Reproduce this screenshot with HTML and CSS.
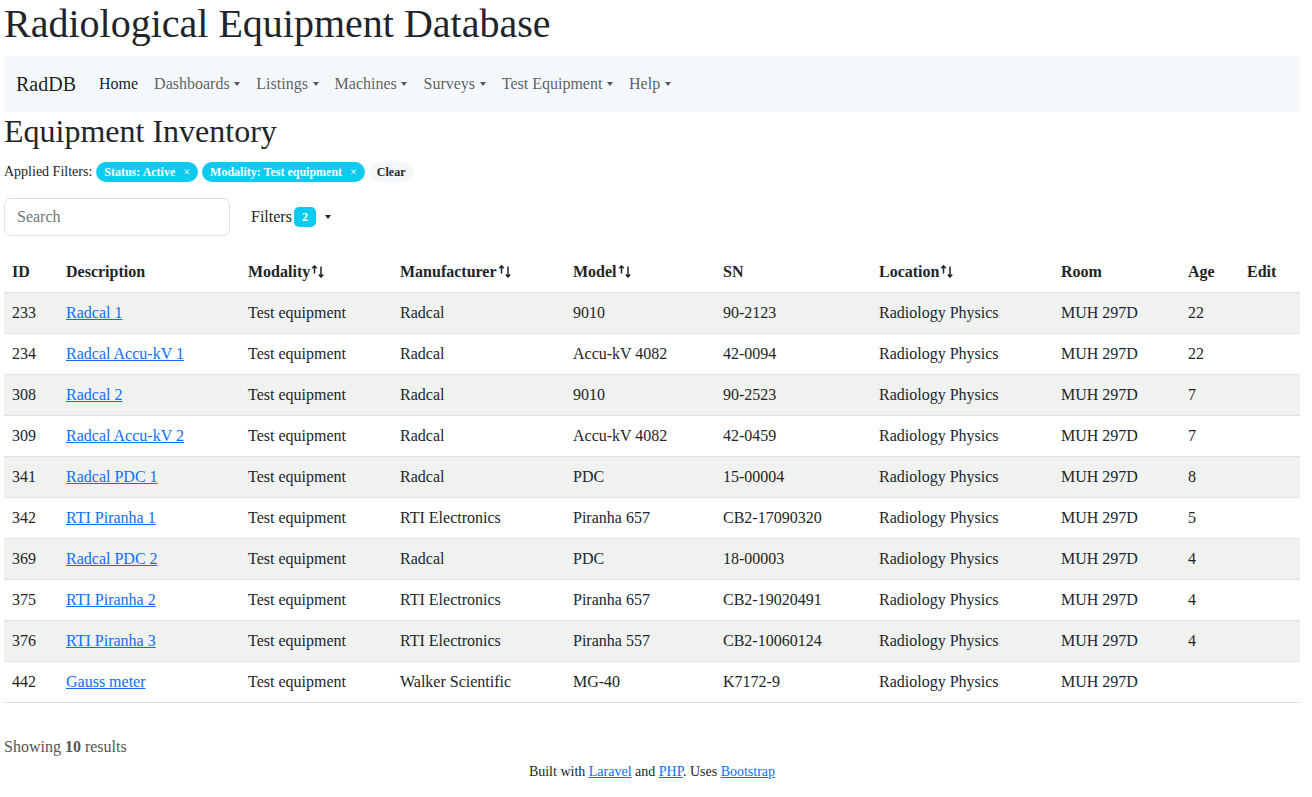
FILE: index.html
```html
<!DOCTYPE html>
<html>
<head>
<meta charset="utf-8">
<link rel="stylesheet" href="styles.css">
</head>
<body>
<div class="page">
  <h1 class="title">Radiological Equipment Database</h1>
  <nav class="navbar">
    <span class="brand">RadDB</span>
    <ul class="nav">
      <li class="nav-link active">Home</li>
      <li class="nav-link dd">Dashboards</li>
      <li class="nav-link dd">Listings</li>
      <li class="nav-link dd">Machines</li>
      <li class="nav-link dd">Surveys</li>
      <li class="nav-link dd">Test Equipment</li>
      <li class="nav-link dd">Help</li>
    </ul>
  </nav>
  <h2 class="heading">Equipment Inventory</h2>
  <div class="applied">
    <span>Applied Filters:</span>
    <span class="pill info">Status: Active <span class="x">×</span></span>
    <span class="pill info">Modality: Test equipment <span class="x">×</span></span>
    <span class="pill light">Clear</span>
  </div>
  <div class="toolbar">
    <input class="search" type="text" placeholder="Search">
    <button class="filters dd">Filters <span class="count">2</span></button>
  </div>
  <table class="grid">
    <colgroup>
      <col style="width:54px"><col style="width:182px"><col style="width:152px"><col style="width:173px"><col style="width:150px"><col style="width:156px"><col style="width:182px"><col style="width:127px"><col style="width:59px"><col style="width:61px">
    </colgroup>
    <thead>
      <tr>
        <th>ID</th><th>Description</th>
        <th>Modality<svg class="sort" viewBox="0 0 14 14"><path d="M3.5 9.5V2M1.3 4.3L3.5 1.8L5.7 4.3M10 2.5V12.8M7.8 10.5L10 13L12.2 10.5"/></svg></th>
        <th>Manufacturer<svg class="sort" viewBox="0 0 14 14"><path d="M3.5 9.5V2M1.3 4.3L3.5 1.8L5.7 4.3M10 2.5V12.8M7.8 10.5L10 13L12.2 10.5"/></svg></th>
        <th>Model<svg class="sort" viewBox="0 0 14 14"><path d="M3.5 9.5V2M1.3 4.3L3.5 1.8L5.7 4.3M10 2.5V12.8M7.8 10.5L10 13L12.2 10.5"/></svg></th>
        <th>SN</th>
        <th>Location<svg class="sort" viewBox="0 0 14 14"><path d="M3.5 9.5V2M1.3 4.3L3.5 1.8L5.7 4.3M10 2.5V12.8M7.8 10.5L10 13L12.2 10.5"/></svg></th>
        <th>Room</th><th>Age</th><th>Edit</th>
      </tr>
    </thead>
    <tbody>
      <tr><td>233</td><td><a href="#">Radcal 1</a></td><td>Test equipment</td><td>Radcal</td><td>9010</td><td>90-2123</td><td>Radiology Physics</td><td>MUH 297D</td><td>22</td><td></td></tr>
      <tr><td>234</td><td><a href="#">Radcal Accu-kV 1</a></td><td>Test equipment</td><td>Radcal</td><td>Accu-kV 4082</td><td>42-0094</td><td>Radiology Physics</td><td>MUH 297D</td><td>22</td><td></td></tr>
      <tr><td>308</td><td><a href="#">Radcal 2</a></td><td>Test equipment</td><td>Radcal</td><td>9010</td><td>90-2523</td><td>Radiology Physics</td><td>MUH 297D</td><td>7</td><td></td></tr>
      <tr><td>309</td><td><a href="#">Radcal Accu-kV 2</a></td><td>Test equipment</td><td>Radcal</td><td>Accu-kV 4082</td><td>42-0459</td><td>Radiology Physics</td><td>MUH 297D</td><td>7</td><td></td></tr>
      <tr><td>341</td><td><a href="#">Radcal PDC 1</a></td><td>Test equipment</td><td>Radcal</td><td>PDC</td><td>15-00004</td><td>Radiology Physics</td><td>MUH 297D</td><td>8</td><td></td></tr>
      <tr><td>342</td><td><a href="#">RTI Piranha 1</a></td><td>Test equipment</td><td>RTI Electronics</td><td>Piranha 657</td><td>CB2-17090320</td><td>Radiology Physics</td><td>MUH 297D</td><td>5</td><td></td></tr>
      <tr><td>369</td><td><a href="#">Radcal PDC 2</a></td><td>Test equipment</td><td>Radcal</td><td>PDC</td><td>18-00003</td><td>Radiology Physics</td><td>MUH 297D</td><td>4</td><td></td></tr>
      <tr><td>375</td><td><a href="#">RTI Piranha 2</a></td><td>Test equipment</td><td>RTI Electronics</td><td>Piranha 657</td><td>CB2-19020491</td><td>Radiology Physics</td><td>MUH 297D</td><td>4</td><td></td></tr>
      <tr><td>376</td><td><a href="#">RTI Piranha 3</a></td><td>Test equipment</td><td>RTI Electronics</td><td>Piranha 557</td><td>CB2-10060124</td><td>Radiology Physics</td><td>MUH 297D</td><td>4</td><td></td></tr>
      <tr><td>442</td><td><a href="#">Gauss meter</a></td><td>Test equipment</td><td>Walker Scientific</td><td>MG-40</td><td>K7172-9</td><td>Radiology Physics</td><td>MUH 297D</td><td></td><td></td></tr>
    </tbody>
  </table>
  <p class="showing">Showing <b>10</b> results</p>
  <footer class="footer">Built with <a href="#">Laravel</a> and <a href="#">PHP</a>. Uses <a href="#">Bootstrap</a></footer>
</div>
</body>
</html>
```
FILE: styles.css
```css
* { box-sizing: border-box; }
body {
  margin: 0;
  font-family: "Liberation Serif", "Times New Roman", serif;
  font-size: 16px;
  line-height: 1.5;
  color: #212529;
  background: #fff;
}
a { color: #0d6efd; }
.page { padding: 0 12px 0 4px; }
.title {
  margin: 0 0 8px;
  font-size: 40px;
  font-weight: 400;
  line-height: 1.2;
}
.navbar {
  display: flex;
  align-items: center;
  height: 56px;
  padding: 8px 12px;
  background: #f4f8fb;
}
.brand {
  font-size: 20px;
  line-height: 30px;
  margin-right: 15px;
  color: rgba(0,0,0,.9);
}
.nav {
  display: flex;
  list-style: none;
  margin: 0;
  padding: 0;
}
.nav-link {
  padding: 8px;
  color: rgba(0,0,0,.65);
}
.nav-link.active { color: rgba(0,0,0,.9); }
.dd::after {
  content: "";
  display: inline-block;
  margin-left: 4.7px;
  vertical-align: 3px;
  border-top: 4px solid;
  border-right: 3.8px solid transparent;
  border-left: 3.8px solid transparent;
}
.heading {
  margin: 0 0 11px;
  font-size: 32px;
  font-weight: 400;
  line-height: 1.2;
}
.applied {
  display: flex;
  align-items: center;
  gap: 4px;
  font-size: 14px;
  line-height: 21px;
}
.pill {
  display: inline-block;
  padding: 3px 8px;
  border-radius: 10px;
  font-size: 12px;
  font-weight: 700;
  line-height: 14px;
}
.pill.info { background: #0dcaf0; color: #fff; }
.pill.light { background: #f4f8fb; color: #212529; }
.pill .x { font-weight: 400; margin-left: 5px; font-size: 12px; }
.toolbar {
  display: flex;
  align-items: center;
  margin-top: 16px;
  gap: 9px;
}
.search {
  width: 226px;
  height: 38px;
  padding: 6px 12px;
  border: 1px solid #dee2e6;
  border-radius: 6px;
  font-family: inherit;
  font-size: 16px;
  color: #212529;
}
.search::placeholder { color: #6c757d; }
.filters {
  background: none;
  border: 0;
  padding: 6px 12px;
  font-family: inherit;
  font-size: 16px;
  color: #212529;
  display: flex;
  align-items: center;
}
.filters::after { margin-left: 9px; vertical-align: 0; }
.count {
  display: inline-block;
  margin-left: 2px;
  background: #0dcaf0;
  color: #fff;
  font-size: 12px;
  font-weight: 700;
  line-height: 14px;
  padding: 3px 8px;
  border-radius: 5px;
}
.grid {
  width: 1296px;
  margin-top: 16px;
  border-collapse: collapse;
  table-layout: fixed;
}
.grid th, .grid td {
  padding: 8px;
  text-align: left;
  border-bottom: 1px solid #dee2e6;
  white-space: nowrap;
}
.grid th { font-weight: 700; }
.grid tbody tr:nth-child(odd) td { background: #f0f2f0; }
.sort {
  width: 14px;
  height: 14px;
  margin-left: 1px;
  vertical-align: -1px;
  fill: none;
  stroke: #212529;
  stroke-width: 1.5;
}
.showing {
  margin: 32px 0 0;
  font-size: 16px;
  line-height: 24px;
  color: #555;
}
.footer {
  margin-top: 2px;
  text-align: center;
  font-size: 14px;
  line-height: 21px;
}
```
